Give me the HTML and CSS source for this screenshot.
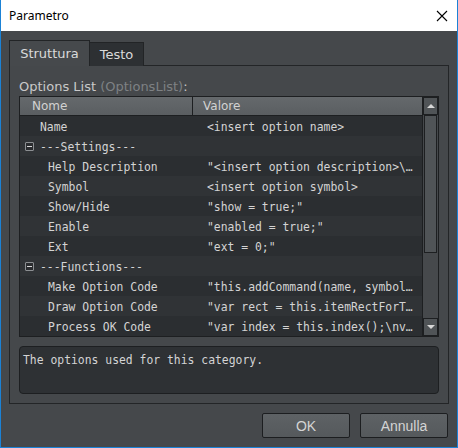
FILE: index.html
```html
<!DOCTYPE html>
<html lang="it">
<head>
    <meta charset="UTF-8">
    <title>Parametro</title>
    <link rel="stylesheet" href="styles.css">
</head>
<body>
    <div class="window">
        <div class="titlebar">
            <span class="title">Parametro</span>
            <svg class="close" width="12" height="12" viewBox="0 0 12 12">
                <path d="M1 1 L11 11 M11 1 L1 11" stroke="#000" stroke-width="1.1" fill="none"/>
            </svg>
        </div>

        <div class="dialog">
            <div class="tabs">
                <div class="tab active">Struttura</div>
                <div class="tab">Testo</div>
            </div>

            <div class="pane">
                <div class="label">Options List <span class="dim">(OptionsList)</span>:</div>

                <div class="tree">
                    <div class="tree-main">
                        <div class="head">
                            <div class="head-name">Nome</div>
                            <div class="head-value">Valore</div>
                        </div>
                        <div class="row">
                            <div class="cell-name lvl1">Name</div>
                            <div class="cell-value">&lt;insert option name&gt;</div>
                        </div>
                        <div class="row alt">
                            <div class="cell-name"><span class="toggle"></span>---Settings---</div>
                            <div class="cell-value"></div>
                        </div>
                        <div class="row">
                            <div class="cell-name lvl2">Help Description</div>
                            <div class="cell-value">"&lt;insert option description&gt;\…</div>
                        </div>
                        <div class="row alt">
                            <div class="cell-name lvl2">Symbol</div>
                            <div class="cell-value">&lt;insert option symbol&gt;</div>
                        </div>
                        <div class="row">
                            <div class="cell-name lvl2">Show/Hide</div>
                            <div class="cell-value">"show = true;"</div>
                        </div>
                        <div class="row alt">
                            <div class="cell-name lvl2">Enable</div>
                            <div class="cell-value">"enabled = true;"</div>
                        </div>
                        <div class="row">
                            <div class="cell-name lvl2">Ext</div>
                            <div class="cell-value">"ext = 0;"</div>
                        </div>
                        <div class="row alt">
                            <div class="cell-name"><span class="toggle"></span>---Functions---</div>
                            <div class="cell-value"></div>
                        </div>
                        <div class="row">
                            <div class="cell-name lvl2">Make Option Code</div>
                            <div class="cell-value">"this.addCommand(name, symbol…</div>
                        </div>
                        <div class="row alt">
                            <div class="cell-name lvl2">Draw Option Code</div>
                            <div class="cell-value">"var rect = this.itemRectForT…</div>
                        </div>
                        <div class="row">
                            <div class="cell-name lvl2">Process OK Code</div>
                            <div class="cell-value">"var index = this.index();\nv…</div>
                        </div>
                    </div>

                    <div class="scrollbar">
                        <div class="sb-btn"><span class="arrow-up"></span></div>
                        <div class="sb-track"><div class="sb-thumb"></div></div>
                        <div class="sb-btn"><span class="arrow-down"></span></div>
                    </div>
                </div>

                <div class="desc">The options used for this category.</div>
            </div>

            <div class="buttons">
                <button class="btn">OK</button>
                <button class="btn">Annulla</button>
            </div>
        </div>
    </div>
</body>
</html>
```

FILE: styles.css
```css
/* base */
body {
    margin: 0;
    padding: 0;
    background: #ffffff;
}

.window {
    width: 458px;
    height: 448px;
    box-sizing: border-box;
    border: 1px solid #1b82d6;
    border-top: none;
    display: flex;
    flex-direction: column;
    font-family: "DejaVu Sans", sans-serif;
}

/* barra del titolo */
.titlebar {
    height: 31px;
    flex: none;
    background: #ffffff;
    display: flex;
    align-items: center;
    justify-content: space-between;
    padding: 0 9px 0 8px;
    box-sizing: border-box;
}
.title {
    font-family: "Noto Sans", "Liberation Sans", sans-serif;
    font-size: 12px;
    color: #000000;
}
.close {
    display: block;
}

/* corpo del dialogo */
.dialog {
    flex: 1;
    background: #45484b;
    padding: 9px 8px 9px 8px;
    display: flex;
    flex-direction: column;
}

.tabs {
    display: flex;
    align-items: flex-end;
    height: 26px;
    flex: none;
    margin-bottom: -1px;
    position: relative;
    z-index: 1;
}
.tab {
    width: 55px;
    height: 24px;
    box-sizing: border-box;
    border: 1px solid #222426;
    border-bottom: none;
    background: #2d3033;
    color: #dadada;
    font-size: 13px;
    line-height: 23px;
    text-align: center;
    margin-left: -1px;
}
.tab.active {
    width: 81px;
    height: 26px;
    background: #46494c;
    margin-left: 0;
    line-height: 25px;
}

.pane {
    flex: 1;
    border: 1px solid #232527;
    padding: 12px 9px 9px 9px;
    display: flex;
    flex-direction: column;
}

.label {
    font-size: 13px;
    line-height: 17px;
    color: #c9c9c9;
    margin-bottom: 1px;
}
.label .dim {
    color: #7e8184;
}

/* albero delle opzioni */
.tree {
    display: flex;
    border: 1px solid #1d1f21;
    background: #2b2e31;
}
.tree-main {
    flex: 1;
    min-width: 0;
}

.head {
    display: flex;
    height: 19px;
    box-sizing: border-box;
    border-bottom: 1px solid #1d1f21;
    background: linear-gradient(#65696c, #5a5e61);
    font-size: 12px;
    line-height: 17px;
    padding-top: 1px;
    color: #d2d2d2;
}
.head-name {
    width: 173px;
    margin-top: -1px;
    box-sizing: border-box;
    padding-left: 12px;
    padding-top: 1px;
    border-right: 1px solid #1d1f21;
}
.head-value {
    flex: 1;
    padding-left: 10px;
}

.row {
    display: flex;
    height: 20px;
    box-sizing: border-box;
    padding-top: 2px;
    font-family: "DejaVu Sans Mono", monospace;
    font-size: 11.4px;
    line-height: 19px;
    color: #d4d4d4;
    background: #2b2e31;
}
.row.alt {
    background: #303336;
}
.cell-name {
    width: 174px;
    box-sizing: border-box;
    padding-left: 5px;
    display: flex;
    align-items: center;
    white-space: nowrap;
}
.cell-name.lvl1 {
    padding-left: 20px;
}
.cell-name.lvl2 {
    padding-left: 28px;
}
.cell-value {
    flex: 1;
    padding-left: 13px;
    white-space: nowrap;
    overflow: hidden;
}

.toggle {
    width: 9px;
    height: 9px;
    box-sizing: border-box;
    border: 1px solid #8c8f92;
    border-radius: 1px;
    background: #2a2c2f;
    margin-right: 6px;
    margin-top: -2px;
    position: relative;
}
.toggle::after {
    content: "";
    position: absolute;
    left: 1px;
    top: 3px;
    width: 5px;
    height: 1px;
    background: #d8d8d8;
}

/* barra di scorrimento */
.scrollbar {
    width: 16px;
    flex: none;
    box-sizing: border-box;
    border-left: 1px solid #1d1f21;
    background: #46494c;
    display: flex;
    flex-direction: column;
}
.sb-btn {
    height: 18px;
    box-sizing: border-box;
    border: 1px solid #1d1f21;
    background: #505457;
    display: flex;
    align-items: center;
    justify-content: center;
}
.sb-track {
    flex: 1;
    padding: 0 1px;
}
.sb-thumb {
    height: 138px;
    box-sizing: border-box;
    border: 1px solid #1d1f21;
    background: #505457;
}
.arrow-up {
    border-left: 4px solid transparent;
    border-right: 4px solid transparent;
    border-bottom: 4px solid #d8d8d8;
}
.arrow-down {
    border-left: 4px solid transparent;
    border-right: 4px solid transparent;
    border-top: 4px solid #d8d8d8;
}

/* descrizione */
.desc {
    margin-top: 9px;
    height: 48px;
    box-sizing: border-box;
    border: 1px solid #1d1f21;
    border-radius: 4px;
    background: #2e3134;
    padding: 5px 3px;
    font-family: "DejaVu Sans Mono", monospace;
    font-size: 11.4px;
    line-height: 16px;
    color: #d4d4d4;
}

/* pulsanti */
.buttons {
    display: flex;
    justify-content: flex-end;
    gap: 10px;
    margin-top: 9px;
    padding-right: 1px;
}
.btn {
    width: 88px;
    height: 25px;
    border: 1px solid #1c1e20;
    border-radius: 2px;
    background: linear-gradient(#5e6265, #55595c);
    color: #d4d4d4;
    font-family: "Liberation Sans", Arial, sans-serif;
    font-size: 14px;
    padding: 0;
}
```
